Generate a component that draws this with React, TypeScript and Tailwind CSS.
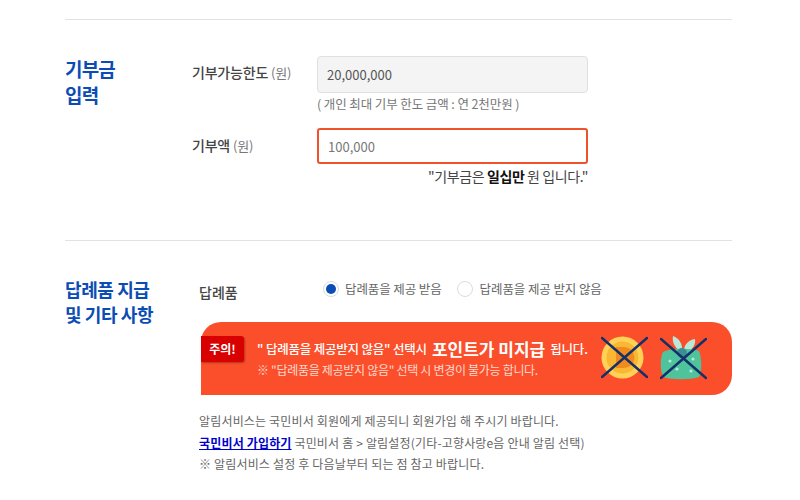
const font = { fontFamily: '"Noto Sans CJK KR", "Noto Sans", sans-serif' };

function CoinIcon() {
  return (
    <svg width="47" height="43" viewBox="0 0 47 43" className="block">
      <circle cx="21.5" cy="21.5" r="21" fill="#ffd257" />
      <circle cx="21.5" cy="21.5" r="16" fill="#f9b733" />
      <path d="M15 11h8a10.5 10.5 0 0 1 0 21h-8z" fill="#f08c1d" />
      <path d="M1 2l45 39M46 2L1 41" stroke="#14306b" strokeWidth="2.4" strokeLinecap="round" />
    </svg>
  );
}

function GiftIcon() {
  return (
    <svg width="47" height="44" viewBox="0 0 47 44" className="block">
      <path d="M20 15C14 11 12 5 13 0c6 2 10 8 9 15zM24 15c0-6 4-11 11-12 1 6-3 11-8 13z" fill="#b9e8d8" />
      <path d="M3 16c8-4 28-4 36-1 3 7 3 21 0 26-9 3-27 3-36 0-3-7-3-19 0-25z" fill="#4fc39b" />
      <circle cx="22" cy="17" r="5" fill="#3b8f93" />
      <circle cx="10" cy="25" r="1.6" fill="#b9e8d8" />
      <circle cx="33" cy="23" r="1.6" fill="#b9e8d8" />
      <circle cx="17" cy="33" r="1.6" fill="#b9e8d8" />
      <circle cx="31" cy="35" r="1.6" fill="#b9e8d8" />
      <path d="M1 3l45 39M46 3L1 42" stroke="#14306b" strokeWidth="2.4" strokeLinecap="round" />
    </svg>
  );
}

export default function App() {
  return (
    <div className="h-[500px] w-[800px] overflow-hidden bg-white pl-[65px] pt-[19px]" style={font}>
      <div className="w-[667px]">
        {/* 기부금 입력 */}
        <section className="flex h-[221px] border-t border-[#e2e2e2] pt-[36px]">
          <h2 className="w-[127px] text-[19px] leading-[26px] font-bold tracking-[-0.8px] text-[#0b4db5]">
            기부금
            <br />
            입력
          </h2>
          <div className="w-[396px]">
            <div className="flex">
              <div className="w-[125px] pt-[6px] text-[14px] leading-[20px] font-medium tracking-[-0.2px] text-[#444]">
                기부가능한도 <span className="text-[13px] font-normal text-[#777]">(원)</span>
              </div>
              <div className="w-[271px]">
                <div className="flex h-[37px] items-center rounded-[4px] border border-[#e0e0e0] bg-[#f4f4f4] pl-[9px] text-[13px] text-[#555]">
                  20,000,000
                </div>
                <p className="mt-[2px] text-[12.5px] leading-[18px] tracking-[-0.1px] text-[#777]">( 개인 최대 기부 한도 금액 : 연 2천만원 )</p>
              </div>
            </div>
            <div className="mt-[15px] flex">
              <div className="w-[125px] pt-[7px] text-[14px] leading-[20px] font-medium tracking-[-0.2px] text-[#444]">
                기부액 <span className="text-[13px] font-normal text-[#777]">(원)</span>
              </div>
              <div className="w-[271px]">
                <div className="flex h-[36px] items-center rounded-[3px] border-2 border-[#f0522b] bg-white pl-[9px] pt-[1px] text-[13px] text-[#777]">
                  100,000
                </div>
                <p className="mt-[1px] text-right text-[14px] leading-[22px] tracking-[-0.4px] text-[#444]">
                  "기부금은 <b className="text-[#111]">일십만</b> 원 입니다."
                </p>
              </div>
            </div>
          </div>
        </section>

        {/* 답례품 지급 및 기타 사항 */}
        <section className="flex border-t border-[#e2e2e2] pt-[36px]">
          <h2 className="w-[134px] text-[18px] leading-[25px] font-bold tracking-[-0.4px] text-[#0b4db5]">
            답례품 지급
            <br />및 기타 사항
          </h2>
          <div className="flex-1">
            <div className="flex h-[45px] pt-[1px]">
              <div className="w-[124px] pt-[4px] text-[14px] leading-[20px] font-medium text-[#444]">답례품</div>
              <div className="flex h-[22px] items-center text-[12.5px] tracking-[-0.1px] text-[#666]">
                <span className="flex h-[16px] w-[16px] items-center justify-center rounded-full border border-[#dcdcdc] bg-white">
                  <span className="h-[10px] w-[10px] rounded-full bg-[#0b4db5]" />
                </span>
                <span className="ml-[6px]">답례품을 제공 받음</span>
                <span className="ml-[15px] h-[16px] w-[16px] rounded-full border border-[#dcdcdc] bg-white" />
                <span className="ml-[7px]">답례품을 제공 받지 않음</span>
              </div>
            </div>

            <div className="ml-[2px] flex h-[73px] w-[531px] rounded-tl-[20px] rounded-tr-[20px] rounded-br-[20px] bg-[#fb4f2b]">
              <span className="mt-[14px] flex h-[26px] w-[43px] items-center justify-center rounded-r-[3px] bg-[#d90000] text-[12px] font-bold text-white shadow-[1px_1px_2px_rgba(0,0,0,0.3)]">
                주의!
              </span>
              <div className="ml-[13px] w-[344px] pt-[14px]">
                <p className="flex h-[26px] items-center text-[12.5px] font-medium tracking-[-0.2px] whitespace-nowrap text-white">
                  " 답례품을 제공받지 않음" 선택시
                  <b className="mx-[5px] text-[17px] font-bold tracking-[0px]">포인트가 미지급</b>
                  됩니다.
                </p>
                <p className="-mt-[1px] text-[12px] leading-[18px] tracking-[-0.3px] text-[#ffd9cf]">
                  ※ "답례품을 제공받지 않음" 선택 시 변경이 불가능 합니다.
                </p>
              </div>
              <div className="flex items-start gap-[12px] pt-[14px]">
                <CoinIcon />
                <GiftIcon />
              </div>
            </div>

            <div className="mt-[15px] text-[12px] leading-[21.5px] tracking-[0.17px] text-[#666]">
              <p>알림서비스는 국민비서 회원에게 제공되니 회원가입 해 주시기 바랍니다.</p>
              <p>
                <a href="#" className="font-bold text-[#0000cc] underline">
                  국민비서 가입하기
                </a>{' '}
                국민비서 홈 &gt; 알림설정(기타-고향사랑e음 안내 알림 선택)
              </p>
              <p>※ 알림서비스 설정 후 다음날부터 되는 점 참고 바랍니다.</p>
            </div>
          </div>
        </section>
      </div>
    </div>
  );
}
